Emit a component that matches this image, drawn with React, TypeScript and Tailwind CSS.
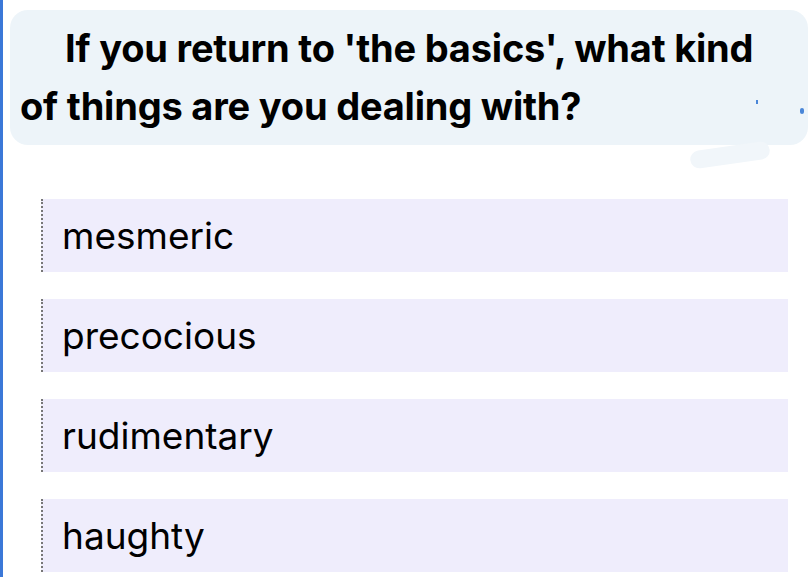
export default function App() {
  const options = ['mesmeric', 'precocious', 'rudimentary', 'haughty'];

  return (
    <div className="w-[810px] h-[577px] bg-white border-l-[3px] border-[#3b78d8] overflow-hidden" style={{ fontFamily: 'Inter, "Liberation Sans", sans-serif' }}>
      <div className="relative ml-[7px] mt-[10px] w-[798px] h-[135px] rounded-[18px] bg-[#edf4f9] pl-[10px] pt-[9px]">
        <p className="text-[38px] font-bold leading-[58px] text-black tracking-[-0.2px] whitespace-nowrap">
          <span className="pl-[45px]">If you return to 'the basics', what kind</span>
          <br />
          of things are you dealing with?
        </p>
        <div className="absolute left-[680px] top-[136px] w-[80px] h-[18px] rounded-full bg-[#f1f6fa] rotate-[-8deg]" />
        <div className="absolute left-[746px] top-[90px] w-[2px] h-[4px] bg-[#4a86d8]" />
        <div className="absolute left-[790px] top-[98px] w-[4px] h-[6px] rounded-full bg-[#4a86d8]" />
      </div>

      <div className="mt-[54px] ml-[38px] w-[747px] flex flex-col gap-[27px]">
        {options.map((o) => (
          <div key={o} className="h-[73px] bg-[#efedfc] border-l-2 border-dotted border-[#777] flex items-center pl-[19px]">
            <span className="text-[37px] text-black leading-none">{o}</span>
          </div>
        ))}
      </div>
    </div>
  );
}
